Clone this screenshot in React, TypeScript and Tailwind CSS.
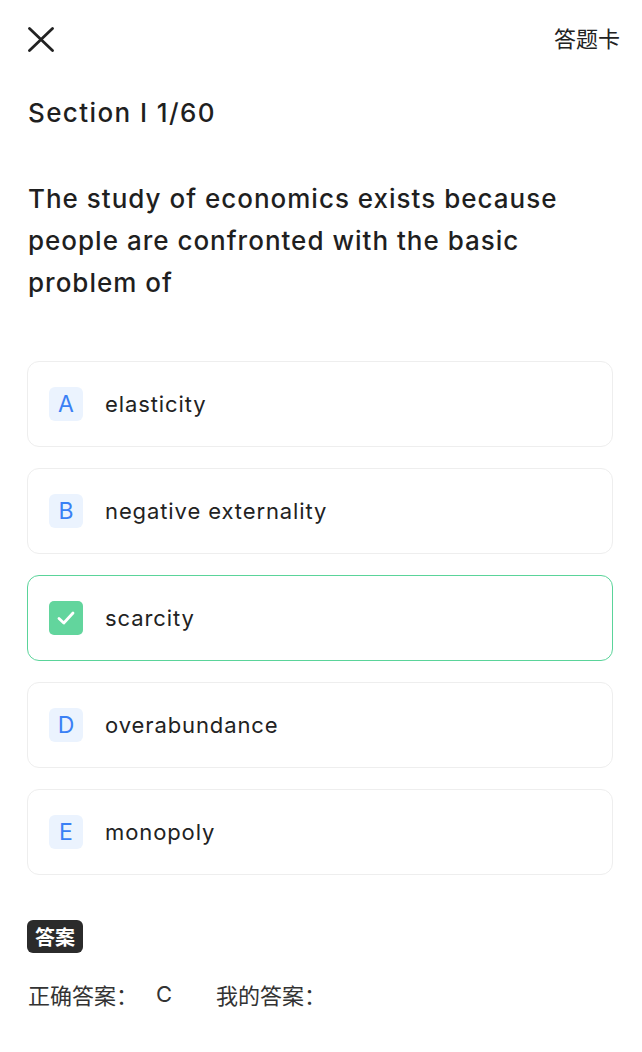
import React from "react";

const options = [
  { key: "A", text: "elasticity" },
  { key: "B", text: "negative externality" },
  { key: "C", text: "scarcity", selected: true },
  { key: "D", text: "overabundance" },
  { key: "E", text: "monopoly" },
];

export default function App() {
  return (
    <div
      className="w-[642px] min-h-[1052px] bg-white text-[#1f1f1f]"
      style={{ fontFamily: '"Inter", "Noto Sans CJK SC", sans-serif' }}
    >
      <div className="flex items-center justify-between pl-[28px] pr-[22px] pt-[27px] h-[52px]">
        <svg width="26" height="25" viewBox="0 0 26 25" fill="none">
          <path d="M1.5 1.5 L24.5 23.5 M24.5 1.5 L1.5 23.5" stroke="#222" strokeWidth="2.8" strokeLinecap="round" />
        </svg>
        <span className="text-[22px] text-[#222] mb-[4px]" style={{ fontFamily: '"Noto Sans CJK SC", sans-serif' }}>答题卡</span>
      </div>
      <div className="px-[28px] mt-[43px] text-[26px] font-medium leading-[36px] tracking-[1.4px]">Section I 1/60</div>
      <div className="pl-[28px] pr-[60px] mt-[47px] text-[26px] font-medium leading-[42px] tracking-[1px]">
        The study of economics exists because people are confronted with the basic problem of
      </div>
      <div className="px-[27px] mt-[57px] flex flex-col gap-[21px] pr-[29px]">
        {options.map((o) => (
          <div
            key={o.key}
            className={`h-[86px] rounded-[12px] border flex items-center pl-[21px] ${
              o.selected ? "border-[#5ad49a] border-[1.5px]" : "border-[#eeeeee]"
            }`}
          >
            {o.selected ? (
              <div className="w-[34px] h-[34px] rounded-[5px] bg-[#62d59d] flex items-center justify-center">
                <svg width="18" height="14" viewBox="0 0 18 14" fill="none">
                  <path d="M2 7.5 L6.8 12 L16 2" stroke="white" strokeWidth="2.8" strokeLinecap="round" strokeLinejoin="round" />
                </svg>
              </div>
            ) : (
              <div className="w-[34px] h-[34px] rounded-[6px] bg-[#ebf3fe] flex items-center justify-center text-[23px] text-[#3a80f5]">
                {o.key}
              </div>
            )}
            <span className="ml-[22px] text-[22px] text-[#222] tracking-[0.9px]">{o.text}</span>
          </div>
        ))}
      </div>
      <div className="px-[27px] mt-[45px]">
        <span
          className="inline-flex items-center justify-center h-[33px] w-[56px] rounded-[6px] bg-[#2b2b2b] text-white text-[20px] font-bold"
          style={{ fontFamily: '"Noto Sans CJK SC", sans-serif' }}
        >
          答案
        </span>
      </div>
      <div className="px-[28px] mt-[25px] flex items-center text-[22px] text-[#333]" style={{ fontFamily: '"Noto Sans CJK SC", sans-serif' }}>
        <span>正确答案：</span>
        <span className="ml-[18px]" style={{ fontFamily: '"Inter", sans-serif' }}>C</span>
        <span className="ml-[44px]">我的答案：</span>
      </div>
    </div>
  );
}
